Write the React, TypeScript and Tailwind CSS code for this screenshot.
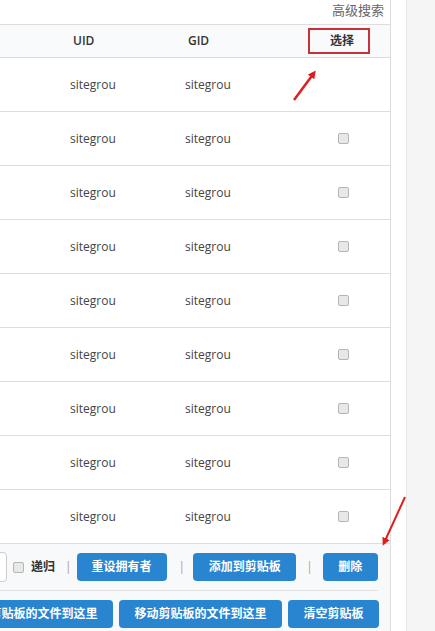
import type { ReactNode } from 'react'

const font = { fontFamily: '"Open Sans", "Noto Sans CJK SC", sans-serif' }

function Btn({ children, className = '' }: { children: ReactNode; className?: string }) {
  return (
    <button
      className={`h-[28px] shrink-0 rounded-[4px] bg-[#2a85d0] px-2 text-[12px] font-bold text-white whitespace-nowrap ${className}`}
    >
      {children}
    </button>
  )
}

function Sep() {
  return <span className="shrink-0 text-[12px] text-[#b8a07a]">|</span>
}

function Box() {
  return <span className="block h-[11px] w-[11px] shrink-0 rounded-[2px] border border-[#b5b5b5] bg-[#e8e8e8]" />
}

export default function App() {
  const rows = Array.from({ length: 9 }, (_, i) => i)

  return (
    <div className="relative flex h-[631px] w-[435px] overflow-hidden bg-white" style={font}>
      {/* main panel */}
      <div className="flex w-[391px] shrink-0 flex-col border-r border-[#dddddd]">
        <div className="flex h-[24px] shrink-0 items-start justify-end pr-[6px] pt-[1px] text-[13px] text-[#666]">
          高级搜索
        </div>

        {/* header */}
        <div className="flex h-[34px] shrink-0 items-center border-y border-[#dddddd] bg-[#f9fafb] text-[12px] font-semibold text-[#333]">
          <div className="w-[73px] shrink-0" />
          <div className="w-[115px] shrink-0">UID</div>
          <div className="w-[120px] shrink-0">GID</div>
          <div className="flex w-[62px] shrink-0 items-center justify-center">
            <span className="flex h-[26px] w-[62px] items-center justify-center border-2 border-[#c9313a] pl-[6px]">
              选择
            </span>
          </div>
        </div>

        {rows.map((i) => (
          <div key={i} className="flex h-[54px] shrink-0 items-center border-b border-[#dddddd] text-[12px] text-[#444]">
            <div className="w-[70px] shrink-0" />
            <div className="w-[115px] shrink-0">sitegrou</div>
            <div className="w-[152px] shrink-0">sitegrou</div>
            <div className="flex w-[12px] justify-center">{i > 0 && <Box />}</div>
          </div>
        ))}

        {/* toolbar */}
        <div className="flex flex-1 flex-col bg-[#f8f9fb] pr-[12px]">
          <div className="flex h-[47px] shrink-0 items-center border-b border-[#e2e2e2] text-[12px] text-[#333] whitespace-nowrap">
            <span className="-ml-[4px] h-[30px] w-[11px] shrink-0 rounded-r-[4px] border border-[#cccccc] bg-white" />
            <span className="ml-[6px] shrink-0">
              <Box />
            </span>
            <span className="ml-[7px] shrink-0 font-semibold">递归</span>
            <span className="ml-[10px]">
              <Sep />
            </span>
            <Btn className="ml-[5px] w-[90px]">重设拥有者</Btn>
            <span className="ml-[12px]">
              <Sep />
            </span>
            <Btn className="ml-[8px] w-[103px]">添加到剪贴板</Btn>
            <span className="ml-[10px]">
              <Sep />
            </span>
            <Btn className="ml-[10px] w-[55px]">删除</Btn>
          </div>
          <div className="flex h-[43px] shrink-0 items-center gap-[6px] pt-[3px]">
            <Btn className="-ml-[50px] w-[163px]">复制剪贴板的文件到这里</Btn>
            <Btn className="w-[163px]">移动剪贴板的文件到这里</Btn>
            <Btn className="w-[91px]">清空剪贴板</Btn>
          </div>
        </div>
      </div>

      <div className="w-[15px] shrink-0 bg-white" />
      <div className="flex-1 border-l border-[#e6e6e6] bg-[#f5f5f5]" />

      {/* annotation arrows */}
      <svg className="pointer-events-none absolute left-0 top-0" width="435" height="631">
        <defs>
          <marker id="ah" markerWidth="8" markerHeight="8" refX="5" refY="4" orient="auto" markerUnits="userSpaceOnUse">
            <path d="M0,0 L8,4 L0,8 Z" fill="#e11d1d" />
          </marker>
        </defs>
        <line x1="294" y1="100" x2="314" y2="73" stroke="#e11d1d" strokeWidth="2.5" markerEnd="url(#ah)" />
        <line x1="405" y1="497" x2="384" y2="543" stroke="#e11d1d" strokeWidth="2" markerEnd="url(#ah)" />
      </svg>
    </div>
  )
}
